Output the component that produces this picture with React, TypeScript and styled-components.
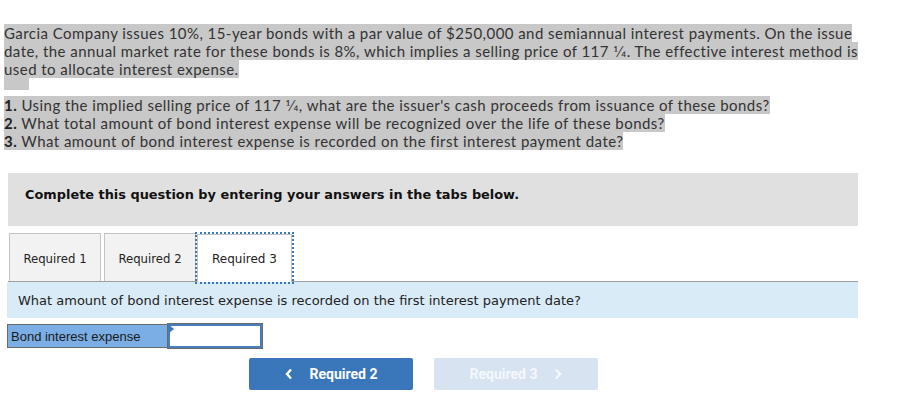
import styled, { createGlobalStyle } from 'styled-components';

const Global = createGlobalStyle`
  html, body {
    margin: 0;
    padding: 0;
    background: #ffffff;
  }
`;

const Page = styled.div`
  width: 906px;
  height: 411px;
  padding: 24px 0 0 4px;
  box-sizing: border-box;
  overflow: hidden;
`;

const Intro = styled.p`
  margin: 0;
  font-family: Lato, 'Open Sans', sans-serif;
  font-size: 15px;
  letter-spacing: 0.45px;
  line-height: 18px;
  color: #333333;
`;

const Mark = styled.span`
  background: #c8c8c8;
`;

const BlankMark = styled.div`
  width: 25px;
  height: 12px;
  background: #c8c8c8;
`;

const Steps = styled.p`
  margin: 6px 0 0 0;
  font-family: Lato, 'Open Sans', sans-serif;
  font-size: 15px;
  letter-spacing: 0.45px;
  line-height: 18px;
  color: #333333;
  & b {
    font-weight: 700;
    color: #222;
  }
`;

const Panel = styled.div`
  margin: 23px 0 0 4px;
  width: 850px;
  height: 53px;
  background: #e0e0e0;
  padding: 14px 0 0 17px;
  box-sizing: border-box;
  font-family: 'DejaVu Sans', Verdana, sans-serif;
  font-weight: 700;
  font-size: 12.9px;
  line-height: 16px;
  color: #111;
`;

const TabBar = styled.div`
  margin: 7px 0 0 4px;
  width: 850px;
  height: 48px;
  display: flex;
  align-items: flex-end;
  border-bottom: 1px solid #a0a0a0;
`;

const Tab = styled.div<{ active?: boolean; gap?: number }>`
  width: ${(p) => (p.active ? '95px' : '92px')};
  height: 48px;
  margin-left: ${(p) => p.gap ?? 1}px;
  margin-bottom: ${(p) => (p.active ? '-1px' : '0')};
  display: flex;
  align-items: center;
  justify-content: center;
  padding-top: ${(p) => (p.active ? '0' : '2px')};
  box-sizing: border-box;
  background: ${(p) => (p.active ? '#ffffff' : '#f2f2f2')};
  border: 1px solid #c4c4c4;
  border-bottom: none;
  outline: ${(p) => (p.active ? '2px dotted #3a77ba' : 'none')};
  font-family: 'DejaVu Sans', Verdana, sans-serif;
  font-size: ${(p) => (p.active ? '12px' : '11.7px')};
  color: #222;
`;

const Info = styled.div`
  margin-left: 3px;
  width: 851px;
  height: 36px;
  background: #daebf8;
  display: flex;
  align-items: center;
  padding-left: 11px;
  box-sizing: border-box;
  font-family: 'DejaVu Sans', Verdana, sans-serif;
  font-size: 13px;
  color: #222;
`;

const AnswerRow = styled.div`
  margin: 6px 0 0 3px;
  display: flex;
  height: 24px;
`;

const Label = styled.div`
  width: 161px;
  box-sizing: border-box;
  background: #7aaee4;
  border: 1px solid #6a6a6a;
  border-right: none;
  display: flex;
  align-items: center;
  padding-left: 3px;
  font-family: 'Liberation Sans', Arial, sans-serif;
  font-size: 13px;
  color: #1a1a1a;
`;

const InputCell = styled.div`
  position: relative;
  width: 94px;
  box-sizing: border-box;
  background: #ffffff;
  border: 2px solid #4a7ebb;
  outline: 1px solid #6a6a6a;
  &::before {
    content: '';
    position: absolute;
    left: -1px;
    top: -1px;
    border-top: 4px solid transparent;
    border-bottom: 4px solid transparent;
    border-left: 5px solid #3a77ba;
  }
`;

const NavRow = styled.div`
  margin: 10px 0 0 245px;
  display: flex;
  gap: 21px;
`;

const NavButton = styled.div<{ disabled?: boolean }>`
  width: 164px;
  height: 32px;
  border-radius: 2px;
  background: ${(p) => (p.disabled ? '#d7e3f0' : '#3a77ba')};
  color: ${(p) => (p.disabled ? '#f4f8fc' : '#ffffff')};
  display: flex;
  align-items: center;
  justify-content: center;
  gap: 17px;
  font-family: Roboto, 'Liberation Sans', sans-serif;
  font-weight: 700;
  font-size: 14px;
  & svg {
    display: block;
  }
`;

function Chevron({ dir }: { dir: 'left' | 'right' }) {
  return (
    <svg width="8" height="12" viewBox="0 0 8 12">
      <path
        d={dir === 'left' ? 'M6 1.5 L2 6 L6 10.5' : 'M2 1.5 L6 6 L2 10.5'}
        fill="none"
        stroke="currentColor"
        strokeWidth="2.4"
      />
    </svg>
  );
}

export default function App() {
  return (
    <>
      <Global />
      <Page>
        <Intro>
          <Mark>
            Garcia Company issues 10%, 15-year bonds with a par value of $250,000 and semiannual interest payments. On the issue
          </Mark>
          <br />
          <Mark>
            date, the annual market rate for these bonds is 8%, which implies a selling price of 117 1⁄4. The effective interest method is
          </Mark>
          <br />
          <Mark>used to allocate interest expense.</Mark>
        </Intro>
        <BlankMark />
        <Steps>
          <Mark>
            <b>1.</b> Using the implied selling price of 117 1⁄4, what are the issuer's cash proceeds from issuance of these bonds?
          </Mark>
          <br />
          <Mark>
            <b>2.</b> What total amount of bond interest expense will be recognized over the life of these bonds?
          </Mark>
          <br />
          <Mark>
            <b>3.</b> What amount of bond interest expense is recorded on the first interest payment date?
          </Mark>
        </Steps>
        <Panel>Complete this question by entering your answers in the tabs below.</Panel>
        <TabBar>
          <Tab>Required 1</Tab>
          <Tab gap={3}>Required 2</Tab>
          <Tab active>Required 3</Tab>
        </TabBar>
        <Info>What amount of bond interest expense is recorded on the first interest payment date?</Info>
        <AnswerRow>
          <Label>Bond interest expense</Label>
          <InputCell />
        </AnswerRow>
        <NavRow>
          <NavButton>
            <Chevron dir="left" />
            Required 2
          </NavButton>
          <NavButton disabled>
            Required 3
            <Chevron dir="right" />
          </NavButton>
        </NavRow>
      </Page>
    </>
  );
}
